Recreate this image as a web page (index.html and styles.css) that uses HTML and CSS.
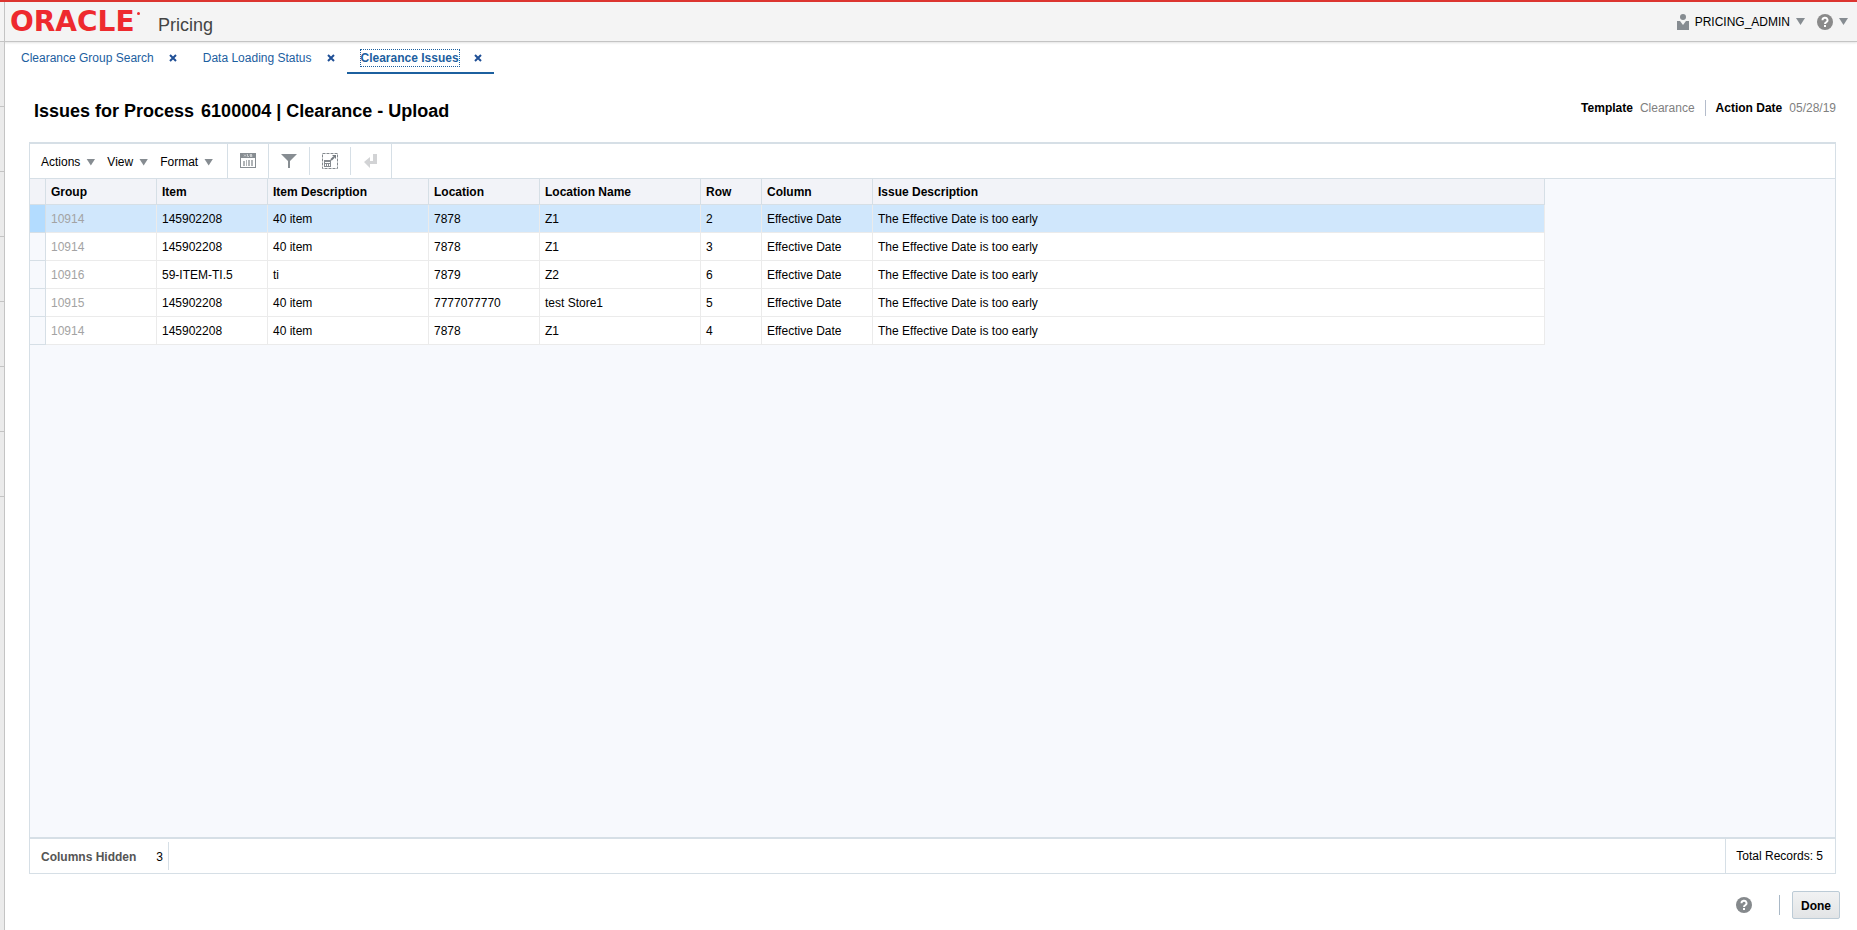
FILE: index.html
```html
<!DOCTYPE html>
<html lang="en">

<head>
	<meta charset="UTF-8">
	<meta name="viewport" content="width=device-width, initial-scale=1">
	<title>Pricing - Clearance Issues</title>
	<link rel="stylesheet" href="styles.css">
</head>

<body>
	<header class="top-bar">
		<div class="top-bar-inner">
			<span class="logo">ORACLE<span class="logo-mark"></span></span>
			<span class="app-name">Pricing</span>
			<div class="user-area">
				<button class="user-button">
					<svg class="user-icon" width="12" height="16" viewBox="0 0 12 16"><circle cx="6" cy="3" r="3"/><path d="M0 7h3l3 4 3-4h3v9H0z"/></svg>
					PRICING_ADMIN
					<span class="arrow"></span>
				</button>
				<button class="help-menu" aria-label="Help">
					<svg width="16" height="16" viewBox="0 0 16 16"><circle cx="8" cy="8" r="8" fill="#8a8a8a"/><path d="M5.5 6.2a2.5 2.4 0 1 1 3.6 2.1q-1.1.6-1.1 1.7" fill="none" stroke="#fff" stroke-width="1.9"/><rect x="7" y="11" width="2" height="2" fill="#fff"/></svg>
					<span class="arrow"></span>
				</button>
			</div>
		</div>
	</header>

	<div class="page">
		<nav class="side-strip">
			<div class="side-item"></div>
			<div class="side-item"></div>
			<div class="side-item"></div>
			<div class="side-item"></div>
			<div class="side-item"></div>
			<div class="side-item"></div>
			<div class="side-item"></div>
		</nav>

		<main class="content">
			<div class="tabs">
				<div class="tab">
					<a href="#" class="tab-link">Clearance Group Search</a>
					<button class="tab-close" aria-label="Close"><svg width="8" height="8" viewBox="0 0 8 8"><path d="M1 1l6 6M7 1L1 7"/></svg></button>
				</div>
				<div class="tab">
					<a href="#" class="tab-link">Data Loading Status</a>
					<button class="tab-close" aria-label="Close"><svg width="8" height="8" viewBox="0 0 8 8"><path d="M1 1l6 6M7 1L1 7"/></svg></button>
				</div>
				<div class="tab active">
					<a href="#" class="tab-link">Clearance Issues</a>
					<button class="tab-close" aria-label="Close"><svg width="8" height="8" viewBox="0 0 8 8"><path d="M1 1l6 6M7 1L1 7"/></svg></button>
				</div>
			</div>

			<div class="title-row">
				<h1 class="title"><span>Issues for Process</span> <span>6100004 | Clearance - Upload</span></h1>
				<dl class="details">
					<dt>Template</dt>
					<dd>Clearance</dd>
					<dt class="divided">Action Date</dt>
					<dd>05/28/19</dd>
				</dl>
			</div>

			<section class="panel">
				<div class="toolbar">
					<div class="menus">
						<button class="menu-button">Actions <span class="arrow"></span></button>
						<button class="menu-button">View <span class="arrow"></span></button>
						<button class="menu-button">Format <span class="arrow"></span></button>
					</div>
					<button class="tool" aria-label="Export to Excel">
						<svg width="16" height="16" viewBox="0 0 16 16"><path d="M0 0h16v15H0z" fill="#878d92"/><path d="M1 5h14v9H1z" fill="#fff"/><path d="M4 1.500l2 2M6 1.500l-2 2M7.500 1v2.500H9M12 1.500h-2v1h2v1h-2" stroke="#c9ccce" fill="none"/><path d="M3 8h2v5H3zM6 7h1v6H6zM8 7h2v6H8zM11 7h2v6h-2z" fill="#b0b4b7"/></svg>
					</button>
					<button class="tool short" aria-label="Query by Example">
						<svg width="16" height="16" viewBox="0 0 16 16"><path d="M0 1h16L9 8v7H7V8z" fill="#878d92"/></svg>
					</button>
					<button class="tool short" aria-label="Detach">
						<svg width="16" height="16" viewBox="0 0 16 16"><path d="M.5.5h15v15H.5z" fill="none" stroke="#858a8f" stroke-dasharray="3 1"/><path d="M2 7h7v7H2z" fill="#858a8f"/><path d="M3 9h5v1H3zM3 11h1v2H3zM5 11h1v2H5zM7 11h1v2H7z" fill="#fff"/><path d="M9 7l3-3" stroke="#777d82" stroke-width="2"/><path d="M10 2h4v4z" fill="#777d82"/></svg>
					</button>
					<button class="tool" aria-label="Wrap" disabled>
						<svg width="14" height="16" viewBox="0 0 14 16"><path d="M9 1h4v10H6v4L0 9l6-5v4h3z" fill="#d2d3d5"/></svg>
					</button>
				</div>

				<div class="table-area">
					<table class="issues">
						<colgroup>
							<col class="col-grip">
							<col class="col-mid">
							<col class="col-mid">
							<col class="col-wide">
							<col class="col-mid">
							<col class="col-wide">
							<col class="col-small">
							<col class="col-mid">
							<col class="col-issue">
						</colgroup>
						<thead>
							<tr>
								<th></th>
								<th>Group</th>
								<th>Item</th>
								<th>Item Description</th>
								<th>Location</th>
								<th>Location Name</th>
								<th>Row</th>
								<th>Column</th>
								<th>Issue Description</th>
							</tr>
						</thead>
						<tbody>
							<tr class="selected">
								<td class="grip"></td>
								<td class="group">10914</td>
								<td>145902208</td>
								<td>40 item</td>
								<td>7878</td>
								<td>Z1</td>
								<td>2</td>
								<td>Effective Date</td>
								<td>The Effective Date is too early</td>
							</tr>
							<tr>
								<td class="grip"></td>
								<td class="group">10914</td>
								<td>145902208</td>
								<td>40 item</td>
								<td>7878</td>
								<td>Z1</td>
								<td>3</td>
								<td>Effective Date</td>
								<td>The Effective Date is too early</td>
							</tr>
							<tr>
								<td class="grip"></td>
								<td class="group">10916</td>
								<td>59-ITEM-TI.5</td>
								<td>ti</td>
								<td>7879</td>
								<td>Z2</td>
								<td>6</td>
								<td>Effective Date</td>
								<td>The Effective Date is too early</td>
							</tr>
							<tr>
								<td class="grip"></td>
								<td class="group">10915</td>
								<td>145902208</td>
								<td>40 item</td>
								<td>7777077770</td>
								<td>test Store1</td>
								<td>5</td>
								<td>Effective Date</td>
								<td>The Effective Date is too early</td>
							</tr>
							<tr>
								<td class="grip"></td>
								<td class="group">10914</td>
								<td>145902208</td>
								<td>40 item</td>
								<td>7878</td>
								<td>Z1</td>
								<td>4</td>
								<td>Effective Date</td>
								<td>The Effective Date is too early</td>
							</tr>
						</tbody>
					</table>
				</div>

				<div class="status-bar">
					<div class="hidden-columns"><b>Columns Hidden</b> <span>3</span></div>
					<div class="total">Total Records: 5</div>
				</div>
			</section>

			<footer class="actions">
				<button class="help-button" aria-label="Help">
					<svg width="16" height="16" viewBox="0 0 16 16"><circle cx="8" cy="8" r="8" fill="#85898c"/><path d="M5.5 6.2a2.5 2.4 0 1 1 3.6 2.1q-1.1.6-1.1 1.7" fill="none" stroke="#fff" stroke-width="1.9"/><rect x="7" y="11" width="2" height="2" fill="#fff"/></svg>
				</button>
				<span class="separator"></span>
				<button class="done-button">Done</button>
			</footer>
		</main>
	</div>
</body>

</html>
```

FILE: styles.css
```css
* {
	box-sizing: border-box;
}

body {
	margin: 0;
	min-height: 100vh;
	display: flex;
	flex-direction: column;
	background-color: white;
	color: black;
	font-family: "Liberation Sans", Arial, Helvetica, sans-serif;
	font-size: 12px;
	line-height: 16px;
}

button {
	display: flex;
	align-items: center;
	padding: 0;
	border: none;
	background: none;
	color: inherit;
	font: inherit;
	cursor: pointer;
}

svg {
	display: block;
}

.arrow {
	width: 9px;
	height: 7px;
	background-color: #868c91;
	clip-path: polygon(0 0, 100% 0, 50% 100%);
}

/* top bar */
.top-bar {
	border-top: 2px solid #dc3530;
	border-bottom: 1px solid #c4c4c4;
	box-shadow: 0 1px 2px #e4e4e4;
	background-color: #f4f4f4;
	padding-left: 4px;
}

.top-bar-inner {
	display: flex;
	align-items: center;
	height: 39px;
	padding: 0 9px 0 5px;
	border-left: 1px solid #c4c4c4;
}

.logo {
	display: flex;
	width: 148px;
	color: #ee2a2e;
	font-family: "DejaVu Sans", Verdana, sans-serif;
	font-size: 28px;
	font-weight: bold;
	line-height: 36px;
}

.logo-mark {
	width: 3px;
	height: 3px;
	margin: 8px 0 0 2px;
	border-radius: 2px;
	background-color: #ee2a2e;
}

.app-name {
	color: #444;
	font-size: 18px;
	line-height: 20px;
	padding-top: 6px;
}

.user-area {
	display: flex;
	gap: 12px;
	margin-left: auto;
}

.user-button,
.help-menu {
	gap: 6px;
}

.user-icon {
	fill: #868c91;
}

/* page */
.page {
	flex: 1;
	display: flex;
}

.side-strip {
	width: 5px;
	border-right: 1px solid #c4c4c4;
	background-color: #ebebeb;
}

.side-item {
	height: 65px;
	border-bottom: 1px solid #c4c4c4;
}

.content {
	flex: 1;
	display: flex;
	flex-direction: column;
}

.tabs {
	display: flex;
	padding: 4px 2px 0;
}

.tab {
	display: flex;
	align-items: center;
	gap: 15px;
	height: 28px;
	padding: 0 12px 2px 14px;
	border-bottom: 2px solid transparent;
}

.tab-link {
	color: #1c609f;
	text-decoration: none;
}

.tab-close svg {
	fill: none;
	stroke: #1f4f96;
	stroke-width: 2;
}

.active {
	border-bottom-color: #1c609f;
}

.active .tab-link {
	font-weight: bold;
	outline: 1px dotted #1c609f;
}

.title-row {
	display: flex;
	justify-content: space-between;
	align-items: flex-start;
	padding: 26px 21px 20px 29px;
}

.title {
	display: flex;
	gap: 7px;
	margin: 0;
	font-size: 18px;
	line-height: 22px;
}

.details {
	display: flex;
	gap: 7px;
	margin: 0;
}

.details dt {
	font-weight: bold;
}

.details dd {
	margin: 0;
	color: #808080;
}

.details .divided {
	border-left: 1px solid #b4bccb;
	margin-left: 3px;
	padding-left: 10px;
}

/* table panel */
.panel {
	flex: 1;
	display: flex;
	flex-direction: column;
	margin: 0 21px 0 24px;
	border: 1px solid #d6dfe6;
	border-top-width: 2px;
}

.toolbar {
	display: flex;
	height: 35px;
	border-bottom: 1px solid #d6dfe6;
}

.menus {
	display: flex;
	gap: 12px;
	padding: 2px 14px 0 11px;
	border-right: 1px solid #d6dfe6;
}

.menu-button {
	gap: 6px;
}

.tool {
	width: 41px;
	justify-content: center;
	border-right: 1px solid #d6dfe6;
}

.short {
	height: 28px;
	align-self: center;
}

.table-area {
	flex: 1;
	background-color: #f7f9fd;
}

.issues {
	table-layout: fixed;
	width: 1515px;
	border-collapse: separate;
	border-spacing: 0;
}

.col-grip {
	width: 16px;
}

.col-small {
	width: 61px;
}

.col-mid {
	width: 111px;
}

.col-wide {
	width: 161px;
}

.issues th {
	height: 26px;
	padding: 0 5px;
	border-right: 1px solid #d6dfe6;
	border-bottom: 1px solid #d6dfe6;
	background-color: #f2f3f8;
	text-align: left;
}

.issues td {
	height: 28px;
	padding: 0 5px;
	border-right: 1px solid #ebebeb;
	border-bottom: 1px solid #ebebeb;
	background-color: white;
}

.issues .grip {
	border-color: #d6dfe6;
	background-color: #f7f9fd;
}

.issues .group {
	color: #a3a3a3;
}

.issues .selected td {
	background-color: #d0e7fc;
}

.issues .selected .grip {
	background-color: #b3dcff;
}

.status-bar {
	display: flex;
	justify-content: space-between;
	height: 36px;
	border-top: 2px solid #d6dfe6;
}

.hidden-columns {
	display: flex;
	align-items: center;
	gap: 20px;
	height: 28px;
	align-self: center;
	padding: 2px 5px 0 11px;
	border-right: 1px solid #d6dfe6;
}

.hidden-columns b {
	color: #555;
}

.total {
	display: flex;
	align-items: center;
	padding: 0 12px 0 10px;
	border-left: 1px solid #d6dfe6;
}

/* bottom buttons */
.actions {
	display: flex;
	justify-content: flex-end;
	align-items: center;
	padding: 17px 17px 11px;
}

.separator {
	width: 1px;
	height: 20px;
	margin: 0 12px 0 27px;
	background-color: #a9b8c6;
}

.done-button {
	height: 28px;
	padding: 2px 8px 0;
	border: 1px solid #bccbd6;
	border-radius: 2px;
	background: linear-gradient(#f1f2f3, #e2e4e6);
	font-weight: bold;
}
```
